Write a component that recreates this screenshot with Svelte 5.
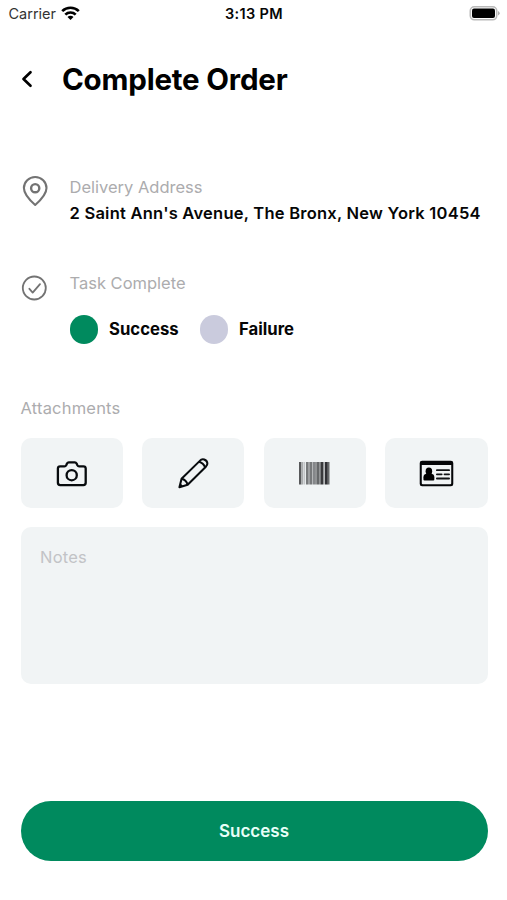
<script>
	let status = $state('success');
	let notes = $state('');

	const statuses = [
		{ id: 'success', label: 'Success' },
		{ id: 'failure', label: 'Failure' }
	];

	// x, width and shade of each stripe in the barcode icon
	const stripes = [
		[0, 2.4, '#58595b'],
		[2.4, 2, '#aaacae'],
		[5, 1.2, '#c4c6c8'],
		[7, 2, '#77797b'],
		[9, 2, '#9d9fa1'],
		[11, 2, '#77797b'],
		[13, 1, '#b5b7b9'],
		[14, 2, '#85878a'],
		[16, 2, '#909294'],
		[18, 2, '#66686a'],
		[20, 1.5, '#929496'],
		[21.5, 3, '#39393c'],
		[25.7, 3.1, '#303034'],
		[28.8, 1.7, '#66686a']
	];
</script>

<div class="screen">
	<div class="status-bar">
		<div class="carrier">
			<span>Carrier</span>
			<svg width="19" height="14" viewBox="0 0 19 14" fill="none" stroke="#000" stroke-width="2.7">
				<path d="M1.2 5.1a12 12 0 0 1 16.6 0" />
				<path d="M4.3 8.6a7.5 7.5 0 0 1 10.4 0" />
				<path d="M9.5 13.9 6.5 10.9a4.2 4.2 0 0 1 6 0z" fill="#000" stroke="none" />
			</svg>
		</div>
		<span class="time">3:13 PM</span>
		<svg class="battery" width="31" height="15" viewBox="0 0 31 15">
			<rect x="1.3" y="0.8" width="26.4" height="13" rx="4" fill="#fff" stroke="#b9b9b9" stroke-width="1.6" />
			<rect x="3" y="2.5" width="23" height="9.6" rx="2" fill="#000" />
			<path d="M29 5v4.6q1.7-.8 1.7-2.3T29 5z" fill="#b0b0b0" />
		</svg>
	</div>

	<header>
		<button class="back" aria-label="Back">
			<svg width="12" height="18" viewBox="0 0 12 18" fill="none" stroke="#000" stroke-width="2.7" stroke-linecap="round" stroke-linejoin="round">
				<path d="M9.5 2.3 2.5 9l7 6.7" />
			</svg>
		</button>
		<h1>Complete Order</h1>
	</header>

	<section class="detail address">
		<svg width="28" height="32" viewBox="0 0 28 32" fill="none" stroke="#737373" stroke-width="2.1">
			<path d="M14.2 30C11.2 27.4 2.9 19.8 2.9 13.1a11.3 11.1 0 0 1 22.6 0C25.5 19.8 17.200 27.400 14.200 30z" stroke-linejoin="round" />
			<circle cx="14.2" cy="13.2" r="4.1" stroke-width="2.4" />
		</svg>
		<div>
			<div class="label">Delivery Address</div>
			<div class="value">2 Saint Ann's Avenue, The Bronx, New York 10454</div>
		</div>
	</section>

	<section class="detail task">
		<svg width="28" height="28" viewBox="0 0 28 28" fill="none" stroke="#737373" stroke-width="1.8">
			<circle cx="13.3" cy="14" r="11.5" />
			<path d="m8.4 14.8 3.3 3.8 7.3-8.500" stroke-linecap="round" stroke-linejoin="round" />
		</svg>
		<div>
			<div class="label">Task Complete</div>
			<div class="options">
				{#each statuses as item}
					<button class="option" onclick={() => (status = item.id)}>
						<span class="dot" class:selected={status === item.id}></span>
						<span>{item.label}</span>
					</button>
				{/each}
			</div>
		</div>
	</section>

	<div class="label attachments-label">Attachments</div>
	<div class="attachments">
		<button aria-label="Take photo">
			<svg width="32" height="28" viewBox="0 0 32 28" fill="none" stroke="#080b0e" stroke-width="2.3" stroke-linejoin="round">
				<path d="M4.2 6.3H8.5Q9.6 6.3 10.2 5.2L11 3.5Q11.6 2.4 12.8 2.4H18.8Q20 2.4 20.6 3.5L21.4 5.2Q22 6.3 23.1 6.3H27.4Q29.7 6.3 29.7 8.6V22.8Q29.7 25.1 27.4 25.1H4.2Q1.9 25.1 1.9 22.8V8.6Q1.9 6.3 4.2 6.3Z" />
				<circle cx="15.7" cy="15.2" r="5.1" />
			</svg>
		</button>
		<button aria-label="Sign">
			<svg width="33" height="33" viewBox="0 0 34 34" fill="none" stroke="#080b0e" stroke-width="2.1" stroke-linejoin="round">
				<path d="M2.5 31.1 4.7 22.5 23.5 4Q25.3 1.7 28 2.5 31.1 3.7 31.3 6.4 31.4 8.3 29.7 10L11 28.6Z" />
				<path d="M22.7 4.9Q27.2 6.2 29 10.7M4.7 22.5Q9.5 23.5 11 28.6" />
				<path d="m2.5 31.1 1-4 3 3z" fill="#080b0e" stroke="none" />
			</svg>
		</button>
		<button aria-label="Scan barcode">
			<svg width="31" height="23" viewBox="0 0 31 23">
				{#each stripes as [x, width, fill]}
					<rect {x} y="0" {width} height="22.5" {fill} />
				{/each}
			</svg>
		</button>
		<button aria-label="Scan ID card">
			<svg width="35" height="27" viewBox="0 0 34 27" preserveAspectRatio="none">
				<path d="M3 .8h28q2.3 0 2.3 2.3v20.8q0 2.3-2.3 2.3H3Q.7 26.2.7 23.9V3.1Q.7.8 3 .8zM2.7 5v18.2q0 1 1 1h26.6q1 0 1-1V5z" fill="#050608" fill-rule="evenodd" />
				<ellipse cx="9.6" cy="11.3" rx="3.2" ry="3.7" />
				<path d="M7.2 13.5h4.800l1.700 1q1.200.8 1.200 2.700v2.200q0 1-1 1H5.300q-1 0-1-1v-2.200q0-1.900 1.200-2.700z" />
				<path d="M17.4 10.2h11.8M17.4 14.3h4.6M24.8 14.3h4.4M17.4 18.5h11.8" stroke="#111315" stroke-width="1.8" stroke-linecap="round" />
			</svg>
		</button>
	</div>

	<textarea placeholder="Notes" bind:value={notes}></textarea>

	<button class="submit">{status === 'success' ? 'Success' : 'Failure'}</button>
</div>

<style>
	:global(body) {
		background: #fff;
	}

	.screen {
		box-sizing: border-box;
		width: 507px;
		height: 900px;
		padding: 0 19.5px 39.5px 20.5px;
		display: flex;
		flex-direction: column;
		overflow: hidden;
		background: #fff;
		color: #060606;
		font-family: Inter, Roboto, sans-serif;
	}

	svg {
		display: block;
		flex-shrink: 0;
	}

	button {
		margin: 0;
		padding: 0;
		border: 0;
		background: none;
		color: inherit;
		font: inherit;
		cursor: pointer;
	}

	.status-bar {
		display: grid;
		grid-template-columns: 1fr auto 1fr;
		align-items: center;
		height: 27px;
		margin: 0 -12px 0 -12px;
		font-size: 14.5px;
	}

	.carrier {
		display: flex;
		align-items: center;
		gap: 5px;
		color: #333;
	}

	.carrier svg {
		margin-top: -2px;
	}

	.time {
		font-weight: 600;
		font-size: 14.5px;
		letter-spacing: 0.35px;
	}

	.battery {
		justify-self: end;
	}

	header {
		display: flex;
		align-items: center;
		height: 40px;
		margin-top: 32px;
	}

	.back {
		width: 41.5px;
	}

	h1 {
		margin: 0;
		font-size: 29.5px;
		font-weight: 700;
		letter-spacing: -0.2px;
		color: #000;
	}

	.detail {
		display: grid;
		grid-template-columns: 49px 1fr;
		align-items: start;
	}

	.address {
		margin-top: 75px;
	}

	.address svg {
		margin-top: 1px;
	}

	.address div,
	.task .label {
		white-space: nowrap;
	}

	.label {
		color: #acacae;
		font-size: 16.5px;
		line-height: 26px;
	}

	.value {
		font-size: 16.5px;
		font-weight: 600;
		line-height: 26px;
		letter-spacing: 0.24px;
	}

	.task {
		margin-top: 44px;
	}

	.task svg {
		margin-top: 4px;
	}

	.options {
		display: flex;
		gap: 21px;
		margin-top: 19px;
	}

	.option {
		display: flex;
		align-items: center;
		gap: 11px;
		font-size: 16.7px;
		font-weight: 700;
	}

	.dot {
		width: 28.5px;
		height: 28.5px;
		border-radius: 50%;
		background: #cacbdd;
	}

	.dot.selected {
		background: #008a5e;
	}

	.attachments-label {
		margin-top: 51.5px;
		letter-spacing: 0.2px;
	}

	.attachments {
		display: grid;
		grid-template-columns: repeat(4, 1fr);
		gap: 19.5px;
		margin-top: 16.5px;
	}

	.attachments button {
		box-sizing: border-box;
		display: flex;
		align-items: center;
		justify-content: center;
		height: 70px;
		padding-top: 2px;
		border-radius: 10px;
		background: #f1f4f5;
	}

	textarea {
		box-sizing: border-box;
		width: 100%;
		height: 157px;
		margin: 19px 0 0;
		padding: 20px 19.5px;
		border: 0;
		border-radius: 10px;
		background: #f1f4f5;
		font: 16.5px/21px Inter, Roboto, sans-serif;
		letter-spacing: 0.2px;
		resize: none;
		outline: none;
	}

	textarea::placeholder {
		color: #c2c3c6;
		opacity: 1;
	}

	.submit {
		height: 59.5px;
		margin-top: auto;
		border-radius: 30px;
		background: #008a5e;
		color: #e8fff8;
		font-size: 17px;
		font-weight: 600;
	}
</style>
